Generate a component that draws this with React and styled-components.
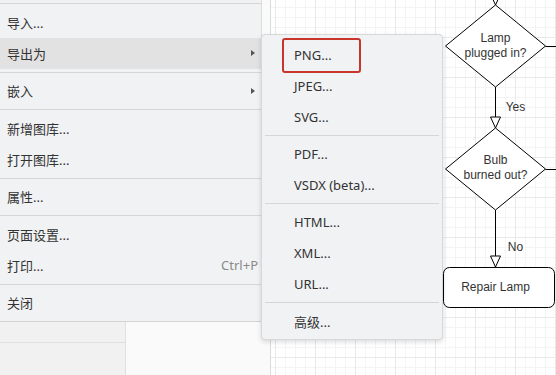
import React from "react";
import styled, { createGlobalStyle } from "styled-components";

const GlobalStyle = createGlobalStyle`
  html, body {
    margin: 0;
    padding: 0;
    overflow: hidden;
    background: #ffffff;
  }
  body {
    font-family: "Noto Sans", "Noto Sans CJK SC", sans-serif;
  }
`;

const Page = styled.div`
  position: relative;
  display: flex;
  width: 556px;
  height: 375px;
  overflow: hidden;
`;

const Sidebar = styled.div`
  display: flex;
  width: 270px;
  flex-shrink: 0;
  background: #fafafa;
  border-right: 1px solid #dcdcdc;
`;

const SideTabs = styled.div`
  display: flex;
  flex-direction: column;
  justify-content: flex-end;
  width: 125px;
  background: #f1f1f1;
  border-right: 1px solid #e0e0e0;
`;

const SideTab = styled.div`
  height: 32px;
  border-top: 1px solid #e0e0e0;
`;

const Canvas = styled.div`
  position: relative;
  flex: 1;
  background-color: #ffffff;
  background-image:
    linear-gradient(to right, #e9e9e9 1px, transparent 1px),
    linear-gradient(to bottom, #e9e9e9 1px, transparent 1px),
    linear-gradient(to right, #f4f4f4 1px, transparent 1px),
    linear-gradient(to bottom, #f4f4f4 1px, transparent 1px);
  background-size: 40px 40px, 40px 40px, 10px 10px, 10px 10px;
  background-position: 4px 37px;
`;

const Diagram = styled.svg`
  position: absolute;
  left: 0;
  top: 0;
  font-family: "Liberation Sans", Arial, sans-serif;
  font-size: 12px;
`;

const Menu = styled.div`
  position: absolute;
  box-sizing: border-box;
  background: #f1f2f4;
  color: #333333;
  font-size: 13px;
`;

const MainMenu = styled(Menu)`
  left: 0;
  top: 0;
  width: 262px;
  padding-bottom: 3px;
  border-bottom: 1px solid #d4d4d4;
  border-right: 1px solid #dddddd;
`;

const SubMenu = styled(Menu)`
  left: 261px;
  top: 34px;
  width: 182px;
  padding: 4.5px 0 2px;
  border: 1px solid #d8d8d8;
  border-radius: 4px;
  box-shadow: 0 2px 5px rgba(0, 0, 0, 0.14);
`;

const Item = styled.div`
  position: relative;
  display: flex;
  align-items: center;
  height: 31px;
  padding: 0 3px 0 ${p => (p.$indent ? "32px" : "7px")};
  background: ${p => (p.$active ? "#e2e2e2" : "transparent")};
  white-space: nowrap;
`;

const Label = styled.span`
  flex: 1;
`;

const Shortcut = styled.span`
  color: #8a8a8a;
`;

const Arrow = styled.span`
  width: 0;
  height: 0;
  margin-right: 3px;
  border-left: 4px solid #555555;
  border-top: 3.5px solid transparent;
  border-bottom: 3.5px solid transparent;
`;

const Separator = styled.div`
  height: 1px;
  background: #d6d6d6;
  margin: ${p => (p.$inset ? "2.5px 3px" : "3px 0 2.5px")};
`;

const Callout = styled.div`
  position: absolute;
  left: 20px;
  top: -1.5px;
  width: 79px;
  height: 35px;
  box-sizing: border-box;
  border: 2.5px solid #c9352b;
  border-radius: 3px;
`;

const mainItems = [
  { sep: true },
  { label: "导入..." },
  { label: "导出为", sub: true, active: true },
  { sep: true },
  { label: "嵌入", sub: true },
  { sep: true },
  { label: "新增图库..." },
  { label: "打开图库..." },
  { sep: true },
  { label: "属性..." },
  { sep: true },
  { label: "页面设置..." },
  { label: "打印...", shortcut: "Ctrl+P" },
  { sep: true },
  { label: "关闭" },
];

const exportItems = [
  { label: "PNG...", marked: true },
  { label: "JPEG..." },
  { label: "SVG..." },
  { sep: true },
  { label: "PDF..." },
  { label: "VSDX (beta)..." },
  { sep: true },
  { label: "HTML..." },
  { label: "XML..." },
  { label: "URL..." },
  { sep: true },
  { label: "高级..." },
];

const ArrowHead = ({ x, y }) => (
  <polygon
    points={`${x - 5},${y - 11} ${x + 5},${y - 11} ${x},${y}`}
    fill="#ffffff"
    stroke="#000000"
  />
);

function Flowchart() {
  return (
    <Diagram width="285" height="375">
      <g transform="translate(-271,0)" fill="none" stroke="#000000" strokeWidth="1">
        <line x1="495.5" y1="-10" x2="495.5" y2="5" />
        <ArrowHead x={495.5} y={5} />
        <polygon points="495.5,5 545.5,46 495.5,87 445.5,46" fill="#ffffff" />
        <line x1="545.5" y1="46.5" x2="560" y2="46.5" />
        <line x1="495.5" y1="87" x2="495.5" y2="117" />
        <ArrowHead x={495.5} y={128} />
        <polygon points="495.5,128 545.5,169 495.5,210 445.5,169" fill="#ffffff" />
        <line x1="545.5" y1="169.5" x2="560" y2="169.5" />
        <line x1="495.5" y1="210" x2="495.5" y2="256" />
        <ArrowHead x={495.5} y={267} />
        <rect x="443.5" y="267.5" width="111" height="40" rx="6" fill="#ffffff" />
        <g fill="#333333" stroke="none" textAnchor="middle">
          <text x="495.5" y="42">Lamp</text>
          <text x="495.5" y="57">plugged in?</text>
          <text x="515.5" y="111">Yes</text>
          <text x="495.5" y="164">Bulb</text>
          <text x="495.5" y="179">burned out?</text>
          <text x="515.5" y="251">No</text>
          <text x="495.5" y="291">Repair Lamp</text>
        </g>
      </g>
    </Diagram>
  );
}

export default function App() {
  return (
    <>
      <GlobalStyle />
      <Page>
        <Sidebar>
          <SideTabs>
            <SideTab />
          </SideTabs>
        </Sidebar>
        <Canvas>
          <Flowchart />
        </Canvas>

        <MainMenu>
          {mainItems.map((it, i) =>
            it.sep ? (
              <Separator key={i} />
            ) : (
              <Item key={i} $active={it.active}>
                <Label>{it.label}</Label>
                {it.shortcut && <Shortcut>{it.shortcut}</Shortcut>}
                {it.sub && <Arrow />}
              </Item>
            )
          )}
        </MainMenu>

        <SubMenu>
          {exportItems.map((it, i) =>
            it.sep ? (
              <Separator key={i} $inset />
            ) : (
              <Item key={i} $indent>
                {it.marked && <Callout />}
                <Label>{it.label}</Label>
              </Item>
            )
          )}
        </SubMenu>
      </Page>
    </>
  );
}
